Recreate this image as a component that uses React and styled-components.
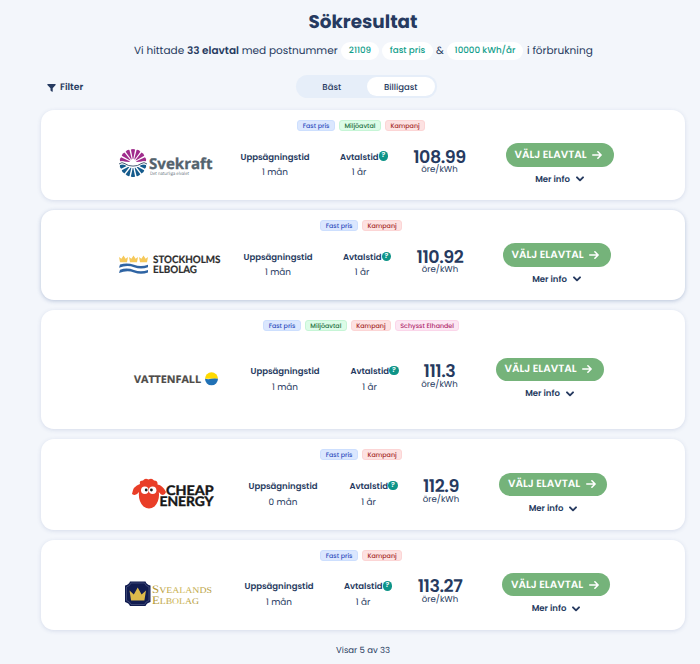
import React from 'react';
import styled, { createGlobalStyle } from 'styled-components';

const GlobalStyle = createGlobalStyle`
  * {
    box-sizing: border-box;
  }
  body {
    margin: 0;
    background: #f3f6fb;
    color: #263a60;
    font-family: Poppins, Inter, "Noto Sans", sans-serif;
    text-rendering: geometricPrecision;
  }
  button {
    font-family: inherit;
    color: inherit;
    text-rendering: inherit;
    border: none;
    padding: 0;
    background: none;
  }
`;

const Page = styled.main`
  width: 700px;
  height: 664px;
  padding: 0 15px 0 41px;
  overflow: hidden;
  white-space: nowrap;
`;

const Title = styled.h1`
  margin: 0;
  padding-top: 10px;
  height: 39px;
  line-height: 25px;
  font-size: 18.4px;
  font-weight: 700;
  text-align: center;
`;

const Summary = styled.p`
  display: flex;
  align-items: center;
  height: 24px;
  margin: 0;
  padding-left: 93px;
  font-size: 10.5px;

  b {
    font-weight: 600;
  }
`;

const Lead = styled.span`
  width: 207px;
`;

const Chip = styled.span`
  width: ${(props) => props.$width}px;
  height: 18px;
  margin-right: ${(props) => props.$gap}px;
  border-radius: 9px;
  background: #fff;
  color: #13a08c;
  font-size: 8.75px;
  font-weight: 500;
  line-height: 18px;
  text-align: center;
`;

const Amp = styled.span`
  width: 11px;
`;

const Toolbar = styled.div`
  position: relative;
  display: flex;
  justify-content: center;
  align-items: center;
  height: 23px;
  margin: 12px 0 12px;
`;

const FilterButton = styled.button`
  position: absolute;
  left: 6px;
  top: 3px;
  display: flex;
  align-items: center;
  gap: 4px;
  height: 19px;
  font-size: 9.3px;
  font-weight: 600;
  line-height: 20px;
`;

const Toggle = styled.div`
  display: flex;
  width: 141px;
  height: 22.5px;
  margin-left: 6px;
  padding: 2px 1.5px;
  border-radius: 12px;
  background: #e6eef9;
`;

const ToggleOption = styled.button`
  width: ${(props) => (props.$active ? 68.5 : 69.5)}px;
  height: 18.5px;
  border-radius: 10px;
  background: ${(props) => (props.$active ? '#fff' : 'transparent')};
  font-size: 8.5px;
  font-weight: 500;
  line-height: 18px;
`;

const List = styled.div`
  display: flex;
  flex-direction: column;
  gap: 10px;
`;

const Card = styled.article`
  height: ${(props) => props.$height}px;
  padding-top: 10px;
  border-radius: 13px;
  background: #fff;
  box-shadow: 0 1px 4px rgba(60, 90, 150, ${(props) => (props.$raised ? 0.32 : 0.16)});
`;

const Tags = styled.div`
  display: flex;
  justify-content: center;
  gap: 4.2px;
  height: 11px;
  padding-right: 3.6px;
`;

const tones = {
  blue: ['#dbe7fe', '#cddffe', '#2f4fc0'],
  green: ['#dcfce7', '#c6f5d6', '#23703f'],
  red: ['#fde2e2', '#fcd5d5', '#a52a2a'],
  pink: ['#fce7f3', '#fbd6ea', '#b02a6b'],
};

const Tag = styled.span`
  width: ${(props) => props.$width}px;
  height: 11px;
  border: 1px solid ${(props) => tones[props.$tone][1]};
  border-radius: 3px;
  background: ${(props) => tones[props.$tone][0]};
  color: ${(props) => tones[props.$tone][2]};
  font-size: 6.35px;
  font-weight: 500;
  line-height: 11px;
  text-align: center;
`;

const Row = styled.div`
  display: grid;
  grid-template-columns: ${(props) => props.$columns};
  justify-items: start;
  align-items: start;
  height: 50px;
  margin-top: ${(props) => props.$top}px;
`;

const LogoCell = styled.div`
  grid-column: 2;
  height: 42px;

  svg {
    display: block;
    overflow: visible;
  }
`;

const Fact = styled.div`
  width: ${(props) => props.$width}px;
  padding-top: 7px;
  font-size: 8.9px;
  text-align: center;
`;

const FactLabel = styled.div`
  display: flex;
  justify-content: center;
  align-items: center;
  height: 14px;
  font-size: 8.5px;
  font-weight: 600;
`;

const FactValue = styled.div`
  height: 15px;
  margin-top: 2px;
  padding-right: ${(props) => props.$shift || 0}px;
  line-height: 15px;
`;

const Help = styled.span`
  flex: none;
  width: 9.6px;
  height: 9.6px;
  margin-top: -2px;
  border-radius: 50%;
  background: #0e9488;
  color: #fff;
  font-size: 7px;
  line-height: 10px;
  text-align: center;
`;

const Price = styled.div`
  width: 54px;
  text-align: center;
`;

const Amount = styled.div`
  display: flex;
  justify-content: center;
  height: 20px;
  padding-top: 4.5px;
  font-size: 17.5px;
  font-weight: 600;
  line-height: 21px;
  letter-spacing: -0.025em;
`;

const Unit = styled.div`
  margin-top: 1px;
  font-size: 8.6px;
  line-height: 13px;
`;

const Actions = styled.div`
  display: flex;
  flex-direction: column;
  align-items: center;
  width: 108px;
`;

const SelectButton = styled.button`
  display: flex;
  align-items: center;
  justify-content: space-between;
  width: 108px;
  height: 23.5px;
  padding: 0 11.5px 0 9px;
  border-radius: 12px;
  background: #75b37a;
  color: #fff;
  font-size: 10.5px;
  font-weight: 600;
`;

const MoreButton = styled.button`
  display: flex;
  align-items: center;
  gap: 6px;
  height: 16px;
  margin-top: 4.5px;
  font-size: 8.5px;
  font-weight: 600;
`;

const Footer = styled.p`
  height: 16px;
  margin: 12px 0 0;
  font-size: 8.5px;
  line-height: 17px;
  text-align: center;
`;

const rays = [-75, -50, -25, 0, 25, 50, 75];

const Svekraft = () => (
  <svg width="96" height="42">
    {rays.map((a) => (
      <g key={a}>
        <path d="M13.7 16L11.9 6.6Q14 5.2 16.1 6.6L14.3 16Z" fill="#a02c8c" transform={`rotate(${a} 14 19.5)`} />
        <path d="M13.7 25L11.9 33.4Q14 34.8 16.1 33.4L14.3 25Z" fill="#155b8c" transform={`rotate(${-a} 14 20.5)`} />
      </g>
    ))}
    <path d="M0 21q3-2.6 6-.3q3 2.4 8 2.4t8-2.4q3-2.3 6 .3" fill="none" stroke="#fff" strokeWidth="2.6" />
    <path d="M0 21q3-2.6 6-.3q3 2.4 8 2.4t8-2.4q3-2.3 6 .3" fill="none" stroke="#4b6078" strokeWidth="1" />
    <text x="30" y="26" textLength="63.5" lengthAdjust="spacingAndGlyphs" fontFamily="Open Sans, sans-serif" fontWeight="700" fontSize="15" fill="#54636d" stroke="#54636d" strokeWidth="0.3">Svekraft</text>
    <text x="31" y="32.2" textLength="39" lengthAdjust="spacingAndGlyphs" fontFamily="Open Sans, sans-serif" fontSize="4.5" fill="#66737c">Det naturliga elvalet</text>
  </svg>
);

const miniCrown = 'M0 1L2.4 2.8L4.5 -0.6L6.6 2.8L9 1L8 6.2H1Z';

const Stockholms = () => (
  <svg width="104" height="42">
    {[0, 10, 20].map((x) => (
      <path key={x} d={miniCrown} fill="#f6c95a" transform={`translate(${x} 13)`} />
    ))}
    <path d="M1 21.5q7-2.3 14 .3q7 2.6 14-.1v2.5q-7 2.6-14 0q-7-2.6-15 .6z" fill="#2f64a3" />
    <path d="M1 26.7q7-2.3 14 .3q7 2.6 14-.1v2.5q-7 2.6-14 0q-7-2.6-15 .6z" fill="#2f64a3" />
    <text x="34" y="20.2" textLength="67.5" lengthAdjust="spacingAndGlyphs" fontFamily="Lato, sans-serif" fontWeight="700" fontSize="10.2" fill="#2d2d2d" stroke="#2d2d2d" strokeWidth="0.2">STOCKHOLMS</text>
    <text x="34" y="29.6" textLength="44" lengthAdjust="spacingAndGlyphs" fontFamily="Lato, sans-serif" fontWeight="700" fontSize="10.2" fill="#2d2d2d" stroke="#2d2d2d" strokeWidth="0.2">ELBOLAG</text>
  </svg>
);

const Vattenfall = () => (
  <svg width="86" height="42">
    <text x="0" y="24.8" textLength="67" lengthAdjust="spacingAndGlyphs" fontFamily="Open Sans, sans-serif" fontWeight="700" fontSize="10.4" fill="#4e4b48" stroke="#4e4b48" strokeWidth="0.2">VATTENFALL</text>
    <path d="M71 20.8a6.5 6.5 0 0 1 13 0z" fill="#ffda00" />
    <path d="M71 20.8a6.5 6.5 0 0 0 13 0q-3.2-.8-6.5 0t-6.5 0z" fill="#2071b5" />
  </svg>
);

const CheapEnergy = () => (
  <svg width="84" height="42">
    <path d="M8 11Q7 7.5 11 7.5Q13 4.5 16.5 6.5Q20 4.5 22 7.5Q26 7.5 25.5 11.5Q31 12.5 34 19Q33 23 29 21.5L26.8 19Q28 28 22.5 33.5Q17 37.5 11.5 33.5Q6 28 7 19Q4 23.5 0 21Q1 13 8 11Z" fill="#e93e27" />
    <circle cx="12.8" cy="17.2" r="3.8" fill="#fff" />
    <circle cx="20.6" cy="17.2" r="3.8" fill="#fff" />
    <circle cx="14.2" cy="17" r="1.4" fill="#222" />
    <circle cx="19.4" cy="17" r="1.4" fill="#222" />
    <text x="34" y="21.5" textLength="47.5" lengthAdjust="spacingAndGlyphs" fontFamily="Lato, sans-serif" fontWeight="700" fontSize="13.2" fill="#161616" stroke="#161616" strokeWidth="0.4">CHEAP</text>
    <text x="27.5" y="33.2" textLength="54" lengthAdjust="spacingAndGlyphs" fontFamily="Lato, sans-serif" fontWeight="700" fontSize="13.2" fill="#161616" stroke="#161616" strokeWidth="0.4">ENERGY</text>
  </svg>
);

const Svealands = () => (
  <svg width="88" height="42">
    <defs>
      <linearGradient id="gold" x1="0" x2="1">
        <stop offset="0" stopColor="#ae9130" />
        <stop offset="0.5" stopColor="#cdb655" />
        <stop offset="1" stopColor="#b0973a" />
      </linearGradient>
    </defs>
    <path d="M5 8.5H20.5Q21.5 11.5 25.5 12.5V29Q21.5 30 20.5 33H5Q4 30 0 29V12.5Q4 11.5 5 8.5Z" fill="#111c50" />
    <path d="M6 10H19.5Q20.5 13 24 14V27.5Q20.5 28.5 19.5 31.5H6Q5 28.5 1.5 27.5V14Q5 13 6 10Z" fill="none" stroke="#59628c" strokeWidth="0.6" />
    <path d="M4.5 17.5L8.8 21.5L12.7 14.5L16.6 21.5L21 17.5L19.4 27.5H6.1Z" fill="#dcb94b" />
    <text x="27" y="20.3" textLength="60" lengthAdjust="spacingAndGlyphs" fontFamily="Liberation Serif, serif" fontSize="8.8" fill="url(#gold)">
      <tspan fontSize="11.5">S</tspan>VEALANDS
    </text>
    <text x="27" y="31.3" textLength="47" lengthAdjust="spacingAndGlyphs" fontFamily="Liberation Serif, serif" fontSize="8.8" fill="url(#gold)">
      <tspan fontSize="11.5">E</tspan>LBOLAG
    </text>
  </svg>
);

const fast = { text: 'Fast pris', tone: 'blue', width: 37.5 };
const miljo = { text: 'Miljöavtal', tone: 'green', width: 41.8 };
const kampanj = { text: 'Kampanj', tone: 'red', width: 40 };
const schysst = { text: 'Schysst Elhandel', tone: 'pink', width: 64 };

const deals = [
  { Logo: Svekraft, tags: [fast, miljo, kampanj], notice: '1 mån', price: '108.99', height: 90, top: 12, columns: '78px 121.5px 99.5px 72.5px 93px 108px' },
  { Logo: Stockholms, tags: [fast, kampanj], notice: '1 mån', price: '110.92', height: 90, top: 12.3, columns: '78px 124.5px 99.5px 70px 89.5px 108px', raised: true },
  { Logo: Vattenfall, tags: [fast, miljo, kampanj, schysst], notice: '1 mån', price: '111.3', height: 119, top: 26.5, columns: '93px 116.5px 100px 62px 83px 108px' },
  { Logo: CheapEnergy, tags: [fast, kampanj], notice: '0 mån', price: '112.9', height: 90.5, top: 12.5, columns: '91px 116.5px 101px 64.5px 85px 108px' },
  { Logo: Svealands, tags: [fast, kampanj], notice: '1 mån', price: '113.27', height: 90.5, top: 12.3, columns: '84px 119.5px 99.5px 69px 89px 108px' },
];

const Deal = ({ deal }) => {
  const { Logo } = deal;
  return (
    <Card $height={deal.height} $raised={deal.raised}>
      <Tags>
        {deal.tags.map((tag) => (
          <Tag key={tag.text} $tone={tag.tone} $width={tag.width}>{tag.text}</Tag>
        ))}
      </Tags>
      <Row $columns={deal.columns} $top={deal.top}>
        <LogoCell><Logo /></LogoCell>
        <Fact $width={69}>
          <FactLabel>Uppsägningstid</FactLabel>
          <FactValue>{deal.notice}</FactValue>
        </Fact>
        <Fact $width={48}>
          <FactLabel>Avtalstid<Help>?</Help></FactLabel>
          <FactValue $shift={10}>1 år</FactValue>
        </Fact>
        <Price>
          <Amount>{deal.price}</Amount>
          <Unit>öre/kWh</Unit>
        </Price>
        <Actions>
          <SelectButton>
            VÄLJ ELAVTAL
            <svg width="10" height="10" viewBox="0 0 10 10" fill="none" stroke="#fff" strokeWidth="1.6" strokeLinecap="round" strokeLinejoin="round">
              <path d="M0.8 5H9M5.9 1.8L9.1 5L5.9 8.2" />
            </svg>
          </SelectButton>
          <MoreButton>
            Mer info
            <svg width="8" height="6" viewBox="0 0 8 6" fill="none" stroke="#263a60" strokeWidth="1.9" strokeLinecap="round" strokeLinejoin="round">
              <path d="M1 1.3L4 4.3L7 1.3" />
            </svg>
          </MoreButton>
        </Actions>
      </Row>
    </Card>
  );
};

const App = () => (
  <>
    <GlobalStyle />
    <Page>
      <Title>Sökresultat</Title>
      <Summary>
        <Lead>Vi hittade <b>33 elavtal</b> med postnummer</Lead>
        <Chip $width={38} $gap={3}>21109</Chip>
        <Chip $width={51} $gap={3}>fast pris</Chip>
        <Amp>&amp;</Amp>
        <Chip $width={76} $gap={4}>10000 kWh/år</Chip>
        <span>i förbrukning</span>
      </Summary>
      <Toolbar>
        <FilterButton>
          <svg width="9" height="8" viewBox="0 0 9 8" fill="#263a60">
            <path d="M0.7 0H8.3Q9 .3 8.6 1L5.7 4.3V7.5Q5.5 8 5 7.7L3.5 6.6V4.3L.4 1Q0 .3 .7 0Z" />
          </svg>
          Filter
        </FilterButton>
        <Toggle>
          <ToggleOption>Bäst</ToggleOption>
          <ToggleOption $active>Billigast</ToggleOption>
        </Toggle>
      </Toolbar>
      <List>
        {deals.map((deal) => (
          <Deal key={deal.price} deal={deal} />
        ))}
      </List>
      <Footer>Visar 5 av 33</Footer>
    </Page>
  </>
);

export default App;
